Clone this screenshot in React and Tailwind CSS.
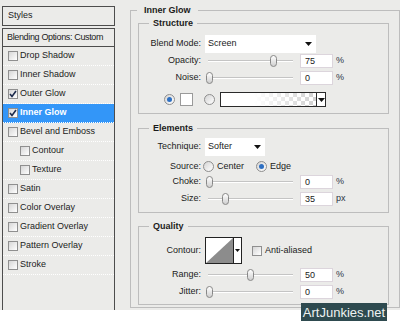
import clsx from 'clsx';

const Tri = ({ className }) => (
  <svg width="7" height="4" viewBox="0 0 7 4" className={className}>
    <polygon points="0,0 7,0 3.5,4" fill="#111" />
  </svg>
);

const CheckBox = ({ checked, className }) => (
  <span className={clsx('flex shrink-0 items-center justify-center w-[10px] h-[10px] border border-[#8f8f8f] bg-gradient-to-br from-[#d6d6d6] to-white', className)}>
    {checked && (
      <svg width="8" height="8" viewBox="0 0 8 8">
        <path d="M1 4 L3 6.5 L7 1" fill="none" stroke="#1d2b4c" strokeWidth="1.6" />
      </svg>
    )}
  </span>
);

const Radio = ({ on, className }) => (
  <span className={clsx('flex shrink-0 items-center justify-center w-[11px] h-[11px] rounded-full border border-[#8e8e8e] bg-gradient-to-br from-[#d4d4d4] to-white', className)}>
    {on && <span className="w-[5px] h-[5px] rounded-full bg-[#2d6fc2]" />}
  </span>
);

const Slider = ({ thumb }) => (
  <div className="relative w-[88px] h-[14px] flex items-center">
    <div className="ml-[3px] w-[85px] h-[2px] bg-[#c4c4c4] border-b border-white" />
    <span className={clsx('absolute top-[1px] w-[7px] h-[12px] rounded-[4px] border border-[#878787] bg-gradient-to-b from-white to-[#cfcfcf]', thumb)} />
  </div>
);

const NumRow = ({ label, value, unit = '%', thumb, className }) => (
  <div className={clsx('flex items-center h-[14px]', className)}>
    <span className="w-[62px] text-right">{label}</span>
    <div className="ml-[4px]">
      <Slider thumb={thumb} />
    </div>
    <div className="ml-[7px] w-[33px] h-[14px] bg-white border border-[#dcd5dc] pl-[4px] leading-[12px]">{value}</div>
    <span className="ml-[3px] text-[#2a3344]">{unit}</span>
  </div>
);

const Group = ({ title, className, legendClass, children }) => (
  <fieldset className={clsx('border border-[#bdbdbd]', className)}>
    <legend className={clsx('font-bold leading-[12px]', legendClass)}>{title}</legend>
    {children}
  </fieldset>
);

const styleRows = [
  { label: 'Drop Shadow' },
  { label: 'Inner Shadow' },
  { label: 'Outer Glow', checked: true },
  { label: 'Inner Glow', checked: true, active: true },
  { label: 'Bevel and Emboss' },
  { label: 'Contour', indent: true },
  { label: 'Texture', indent: true },
  { label: 'Satin' },
  { label: 'Color Overlay' },
  { label: 'Gradient Overlay' },
  { label: 'Pattern Overlay' },
  { label: 'Stroke' },
];

export default function App() {
  return (
    <div className="relative w-[400px] h-[334px] overflow-hidden bg-white text-[9px] text-[#1b1b1b] font-['Liberation_Sans',Arial,sans-serif]">
      <div className="flex h-[310px] bg-[#ebebe9]">
        {/* Styles list */}
        <div className="mt-[6px] ml-[2px] w-[121px] h-[304px] flex flex-col">
          <div className="h-[20px] border border-[#4d4d4d] pl-[5px] flex items-center">Styles</div>
          <div className="mt-[2px] h-[19px] border border-[#4d4d4d] pl-[4px] flex items-center tracking-[-0.35px]">Blending Options: Custom</div>
          <div className="flex-1 border-x border-[#4d4d4d]">
            {styleRows.map((r) => (
              <div
                key={r.label}
                className={clsx(
                  'flex items-center h-[19px] border-b border-dotted border-white',
                  r.active && 'bg-[#3396f8] text-white font-bold'
                )}
              >
                <CheckBox checked={r.checked} className={r.indent ? 'ml-[17px]' : 'ml-[5px]'} />
                <span className="ml-[2px]">{r.label}</span>
              </div>
            ))}
          </div>
        </div>

        {/* Inner Glow settings */}
        <fieldset className="ml-[15px] mt-[4px] w-[270px] shrink-0 self-start border border-[#bdbdbd] pb-[2px]">
          <legend className="ml-[6px] px-[7px] font-bold leading-[12px]">Inner Glow</legend>

          <Group title="Structure" className="ml-[7px] mt-[1px] w-[251px] pb-[6px]" legendClass="ml-[10px] px-[4px]">
            <div className="flex items-center h-[18px] mt-[6px]">
              <span className="w-[62px] text-right">Blend Mode:</span>
              <div className="ml-[4px] w-[111px] h-[18px] bg-white flex items-center justify-between pl-[3px] pr-[4px]">
                Screen
                <Tri />
              </div>
            </div>
            <NumRow className="mt-[1px]" label="Opacity:" value="75" thumb="left-[65px]" />
            <NumRow className="mt-[3px]" label="Noise:" value="0" thumb="left-[1px]" />
            <div className="flex items-center h-[15px] mt-[7px]">
              <Radio on className="ml-[25px]" />
              <span className="ml-[5px] w-[13px] h-[13px] bg-white border border-[#9a9a9a]" />
              <Radio className="ml-[11px]" />
              <div className="ml-[5px] w-[106px] h-[15px] border border-[#2a2a2a] flex bg-white">
                <svg width="95" height="13" viewBox="0 0 95 13">
                  <defs>
                    <pattern id="chk" width="8" height="8" patternUnits="userSpaceOnUse">
                      <rect width="8" height="8" fill="#fff" />
                      <rect width="4" height="4" fill="#d0d0d0" />
                      <rect x="4" y="4" width="4" height="4" fill="#d0d0d0" />
                    </pattern>
                    <linearGradient id="fade" x1="0" x2="1" y1="0" y2="0">
                      <stop offset="0" stopColor="#fff" stopOpacity="1" />
                      <stop offset="0.35" stopColor="#fff" stopOpacity="1" />
                      <stop offset="1" stopColor="#fff" stopOpacity="0" />
                    </linearGradient>
                  </defs>
                  <rect width="95" height="13" fill="url(#chk)" />
                  <rect width="95" height="13" fill="url(#fade)" />
                </svg>
                <div className="w-[9px] border-l border-[#2a2a2a] flex items-center justify-center">
                  <Tri />
                </div>
              </div>
            </div>
          </Group>

          <Group title="Elements" className="ml-[7px] mt-[8px] w-[251px] pb-[6px]" legendClass="ml-[10px] px-[4px]">
            <div className="flex items-center h-[18px] mt-[4px]">
              <span className="w-[62px] text-right">Technique:</span>
              <div className="ml-[4px] w-[60px] h-[18px] bg-white flex items-center justify-between pl-[3px] pr-[4px]">
                Softer
                <Tri />
              </div>
            </div>
            <div className="flex items-center h-[11px] mt-[5px]">
              <span className="w-[62px] text-right">Source:</span>
              <Radio className="ml-[2px]" />
              <span className="ml-[3px] w-[39px]">Center</span>
              <Radio on />
              <span className="ml-[3px]">Edge</span>
            </div>
            <NumRow className="mt-[3px]" label="Choke:" value="0" thumb="left-[1px]" />
            <NumRow className="mt-[3px]" label="Size:" value="35" unit="px" thumb="left-[17px]" />
          </Group>

          <Group title="Quality" className="ml-[7px] mt-[7px] w-[251px] pb-[5px]" legendClass="ml-[10px] px-[4px]">
            <div className="flex items-center h-[27px] mt-[5px]">
              <span className="w-[62px] text-right">Contour:</span>
              <div className="ml-[4px] w-[37px] h-[27px] border border-[#222] flex bg-white">
                <svg width="27" height="25" viewBox="0 0 27 25">
                  <polygon points="0,25 27,0 27,25" fill="#8c8c8c" />
                </svg>
                <div className="w-[8px] border-l border-[#222] flex items-center justify-center">
                  <svg width="5" height="3" viewBox="0 0 5 3">
                    <polygon points="0,0 5,0 2.5,3" fill="#111" />
                  </svg>
                </div>
              </div>
              <CheckBox className="ml-[10px]" />
              <span className="ml-[3px]">Anti-aliased</span>
            </div>
            <NumRow className="mt-[4px]" label="Range:" value="50" thumb="left-[42px]" />
            <NumRow className="mt-[3px]" label="Jitter:" value="0" thumb="left-[1px]" />
          </Group>
        </fieldset>
      </div>

      <div className="absolute right-[13px] top-[303px] w-[86px] h-[18px] bg-[#2e4a4f] text-[#eef2f2] text-[13px] leading-none flex items-center justify-center">
        ArtJunkies.net
      </div>
    </div>
  );
}
